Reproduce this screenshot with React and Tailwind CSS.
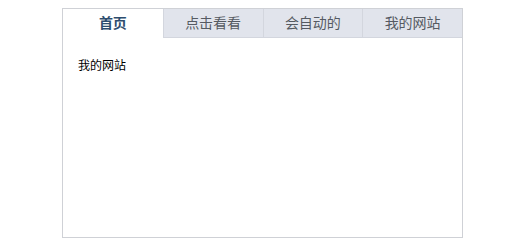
const tabs = ["首页", "点击看看", "会自动的", "我的网站"];

const App = () => {
  return (
    <div
      className="w-[529px] h-[247px] bg-white pt-[8px]"
      style={{ fontFamily: '"Liberation Sans", "Noto Sans CJK SC", sans-serif' }}
    >
      <div className="ml-[62px] w-[401px] h-[230px] border border-[#cfd1d6] flex flex-col">
        <div className="flex h-[29px]">
          {tabs.map((t, i) =>
            i === 0 ? (
              <div
                key={t}
                className="w-[100px] flex items-center justify-center bg-white text-[14px] font-bold text-[#2d4d6e]"
              >
                {t}
              </div>
            ) : (
              <div
                key={t}
                className="w-[100px] flex items-center justify-center bg-[#e1e4ec] border-l border-b border-[#d3d6de] text-[14px] text-[#555a62]"
              >
                {t}
              </div>
            )
          )}
        </div>
        <div className="px-[15px] pt-[19px] text-[12px] text-black">我的网站</div>
      </div>
    </div>
  );
};

export default App;
